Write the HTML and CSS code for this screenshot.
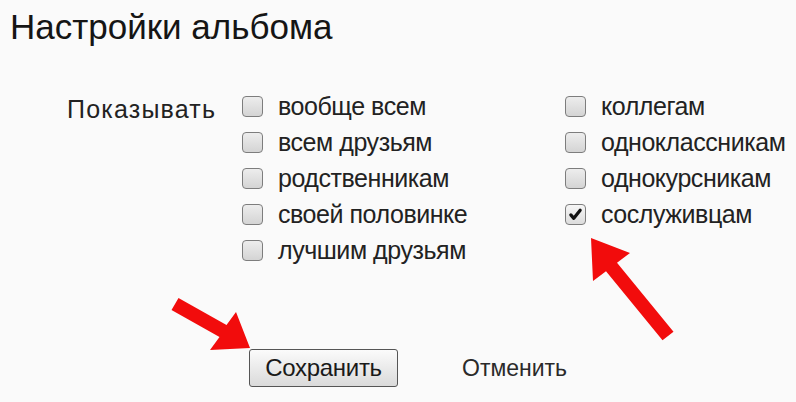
FILE: index.html
```html
<!DOCTYPE html>
<html lang="ru">
<head>
<meta charset="utf-8">
<title>Настройки альбома</title>
<link rel="stylesheet" href="styles.css">
</head>
<body>
<div class="page">
  <h1 class="title">Настройки альбома</h1>
  <div class="settings">
    <div class="show-label">Показывать</div>
    <div class="options">
      <div class="col">
        <label class="opt"><span class="box"></span><span>вообще всем</span></label>
        <label class="opt"><span class="box"></span><span>всем друзьям</span></label>
        <label class="opt"><span class="box"></span><span>родственникам</span></label>
        <label class="opt"><span class="box"></span><span>своей половинке</span></label>
        <label class="opt"><span class="box"></span><span>лучшим друзьям</span></label>
      </div>
      <div class="col">
        <label class="opt"><span class="box"></span><span>коллегам</span></label>
        <label class="opt"><span class="box"></span><span>одноклассникам</span></label>
        <label class="opt"><span class="box"></span><span>однокурсникам</span></label>
        <label class="opt"><span class="box checked"><svg viewBox="0 0 20 20" width="20" height="20"><path d="M4.5 10.5 L8 14.5 L15.5 5" fill="none" stroke="#111" stroke-width="3.8" stroke-linecap="round" stroke-linejoin="round"/></svg></span><span>сослуживцам</span></label>
      </div>
    </div>
  </div>
  <div class="actions">
    <button class="btn-save" type="button">Сохранить</button>
    <span class="cancel">Отменить</span>
  </div>
  <svg class="arrows" width="796" height="402" viewBox="0 0 796 402">
    <polygon fill="#f20c0c" points="591,238 630,253 617,262.7 673.5,331.7 662.5,340.3 606,271.3 593,281"/>
    <polygon fill="#f20c0c" points="250,348 210,350 219.5,337 171.5,310 178.5,298 226.5,325 236,312"/>
  </svg>
</div>
</body>
</html>
```

FILE: styles.css
```css
html, body {
  margin: 0;
  padding: 0;
  background: #fafafa;
}
.page {
  position: relative;
  width: 796px;
  height: 402px;
  overflow: hidden;
  font-family: "Liberation Sans", Arial, sans-serif;
  color: #1e1e1e;
}
.title {
  margin: 0;
  padding: 7px 0 0 10px;
  font-size: 35px;
  font-weight: normal;
  line-height: 40px;
  color: #151515;
}
.settings {
  display: flex;
  margin-top: 49px;
  padding-left: 67px;
}
.show-label {
  width: 175px;
  font-size: 25px;
  letter-spacing: 1.2px;
  line-height: 26px;
  color: #222;
}
.options {
  display: grid;
  grid-template-columns: 323px auto;
}
.col {
  display: flex;
  flex-direction: column;
  gap: 15px;
}
.opt {
  display: flex;
  align-items: center;
  gap: 15px;
  height: 21px;
  font-size: 25px;
  letter-spacing: -0.45px;
  color: #222;
}
.box {
  box-sizing: border-box;
  flex: none;
  width: 21px;
  height: 21px;
  border: 1.5px solid #7d7d7d;
  border-radius: 4px;
  background: linear-gradient(#ededed, #d4d4d4);
  display: flex;
  align-items: center;
  justify-content: center;
}
.box.checked {
  background: linear-gradient(#f6f6f6, #dcdcdc);
}
.box svg {
  width: 17px;
  height: 17px;
}
.actions {
  display: flex;
  align-items: center;
  margin-top: 88px;
  padding-left: 249px;
}
.btn-save {
  box-sizing: border-box;
  width: 149px;
  height: 38px;
  border: 1.5px solid #555;
  border-radius: 3px;
  background: linear-gradient(#fbfbfb, #dadada);
  font-family: "Liberation Sans", Arial, sans-serif;
  font-size: 24px;
  letter-spacing: -0.3px;
  color: #1a1a1a;
  padding: 0;
}
.cancel {
  margin-left: 64px;
  font-size: 23px;
  color: #2a2a2a;
}
.arrows {
  position: absolute;
  left: 0;
  top: 0;
  pointer-events: none;
}
```
